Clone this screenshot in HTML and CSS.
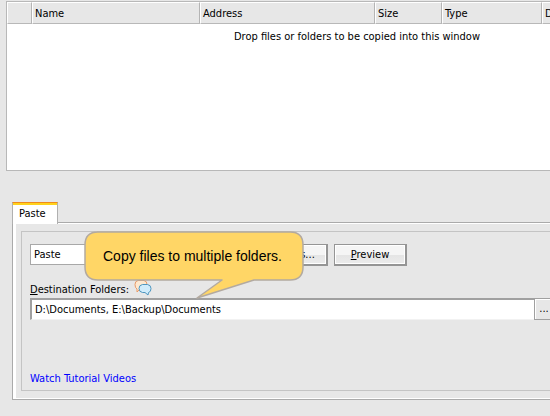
FILE: index.html
```
<!DOCTYPE html>
<html lang="en">
<head>
<meta charset="UTF-8">
<meta name="viewport" content="width=device-width, initial-scale=1.0">
<title>Copy files</title>
<link rel="stylesheet" href="styles.css">
</head>
<body>
<div class="window">
  <table class="file-list">
    <colgroup>
      <col class="col-icon">
      <col class="col-name">
      <col class="col-address">
      <col class="col-size">
      <col class="col-type">
      <col>
    </colgroup>
    <thead>
      <tr>
        <th></th>
        <th>Name</th>
        <th>Address</th>
        <th>Size</th>
        <th>Type</th>
        <th>Date</th>
      </tr>
    </thead>
    <tbody>
      <tr>
        <td colspan="6">Drop files or folders to be copied into this window</td>
      </tr>
    </tbody>
  </table>

  <div class="tabs">
    <button class="tab" type="button">Paste</button>
  </div>

  <div class="panel">
    <form class="group">
      <div class="actions">
        <select class="mode" aria-label="Action">
          <option>Paste</option>
        </select>
        <button class="btn" type="button">Options...</button>
        <button class="btn" type="button"><u>P</u>review</button>

        <div class="callout">
          <svg class="callout-shape" viewBox="0 0 220 69" width="220" height="69">
            <path d="M13 1H206Q219 1 219 14V36Q219 49 206 49H170L113 67L138 49H14Q1 49 1 36V14Q1 1 14 1Z" fill="#ffd666" stroke="#b3aaa0" stroke-width="1.5" stroke-linejoin="round"/>
          </svg>
          <span class="callout-text">Copy files to multiple folders.</span>
        </div>
      </div>

      <div class="label-row">
        <label for="dest"><u>D</u>estination Folders:</label>
        <svg class="chat" viewBox="0 0 18 18" width="18" height="18">
          <path d="M4 0.500H10Q13 1 13 4.500Q13 8.500 9 9H6L3 12V9Q1 8 1 4.500Q1 1 4 0.500Z" fill="#fde9d0" stroke="#e89a68"/>
          <path d="M8.500 4.500H13.500Q17 5 17 8.500Q17 12 14.500 12.500L14 15L11 12.500H8.500Q5 12 5 8.500Q5 5 8.500 4.500Z" fill="#d0ecfb" stroke="#4f96bf"/>
        </svg>
      </div>

      <div class="dest-row">
        <input id="dest" type="text" value="D:\Documents, E:\Backup\Documents">
        <button class="browse" type="button" aria-label="Browse">...</button>
      </div>

      <a class="videos" href="#">Watch Tutorial Videos</a>
    </form>
  </div>
</div>
</body>
</html>
```
FILE: styles.css
```
* { box-sizing: border-box; }
body { margin: 0; background: #e7e7e7; color: #000; overflow: hidden; }
body, button, input, select { font-family: Tahoma, "DejaVu Sans Condensed", "DejaVu Sans", sans-serif; font-size: 11px; line-height: 14px; }

/* the window is wider than the viewport, its right part is cut off */
.window { width: calc(100% + 158px); padding: 1px 0 0 6px; }

.file-list { width: 100%; table-layout: fixed; border-collapse: separate; border-spacing: 0; background: #fff; border: 1px solid #b8b8b8; }
.file-list th { height: 22px; padding: 2px 2px 0; background: #e7e7e7; border-top: 1px solid #fff; border-right: 1px solid #b4b4b4; border-bottom: 1px solid #b8b8b8; border-left: 1px solid #fff; font-weight: normal; text-align: left; }
.file-list td { height: 146px; padding: 6px 0; text-align: center; vertical-align: top; }
.col-icon { width: 25px; }
.col-name { width: 168px; }
.col-address { width: 175px; }
.col-size { width: 67px; }
.col-type { width: 100px; }

.tabs { display: flex; margin: 31px 0 0 6px; }
.tab { position: relative; z-index: 1; height: 22px; margin-bottom: -2px; padding: 0 11px 0 6px; background: #fff; border: 1px solid #b0b0b0; border-top: 1px solid #f08a1c; border-bottom: 0; box-shadow: inset 0 2px #ffd21c; }

.panel { margin-left: 6px; padding: 8px 5px; border: 1px solid #aaa; box-shadow: inset 3px 1px #fff, inset 0 -1px #fff; }
.group { display: flex; flex-direction: column; align-items: flex-start; height: 160px; margin-left: 3px; padding: 12px 8px 0; border: 1px solid #c4c4c4; }

.actions { display: flex; gap: 6px; position: relative; }
.mode { width: 219px; height: 21px; padding: 0 3px; background: #fff; border: 1px solid #a8a8a8; border-radius: 0; appearance: none; color: #000; }
.btn { width: 73px; height: 22px; padding: 0; background: linear-gradient(#f5f5f5 50%, #e4e4e4 50%, #ececec); border: 1px solid #959595; border-right-width: 2px; border-bottom-width: 2px; box-shadow: inset 0 0 0 1px #fff; }

.callout { position: absolute; left: 54px; top: -13px; z-index: 2; width: 220px; }
.callout-shape { display: block; }
.callout-text { position: absolute; left: 19px; top: 16px; font: 14px/18px "Liberation Sans", Arial, sans-serif; white-space: nowrap; }

.label-row { display: flex; align-items: flex-end; gap: 5px; height: 18px; margin-top: 14px; }
.label-row label { line-height: 16px; }
.chat { display: block; }

.dest-row { display: flex; align-self: stretch; height: 22px; }
.dest-row input { width: 504px; padding: 0 3px; background: #fff; border: 1px solid #a0a0a0; border-top-width: 2px; border-left-width: 2px; border-right: 0; border-bottom-color: #f2f2f2; border-radius: 0; }
.browse { width: 20px; padding: 0; background: #e7e7e7; border: 1px solid #a0a0a0; box-shadow: inset 1px 1px #fff; }

.videos { margin-top: 52px; color: #00f; text-decoration: none; }
```
